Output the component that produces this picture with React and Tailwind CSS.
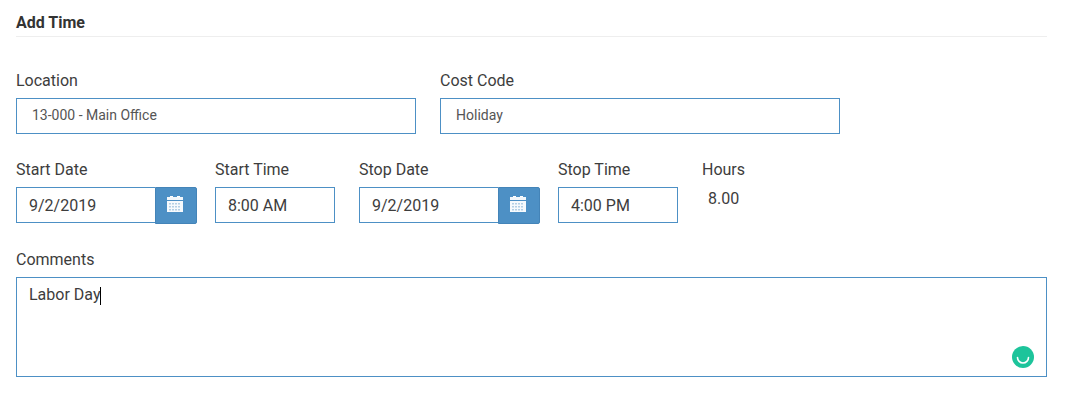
import React from 'react';

const Field = ({ label, className = '', children }) => (
    <div className={`flex flex-col ${className}`}>
        <label className="text-base leading-5 text-[#3d3d3d] mb-[7px]">{label}</label>
        {children}
    </div>
);

// Font Awesome style calendar, drawn small with the grid cut out
const CalendarIcon = () => (
    <svg width="16" height="16" viewBox="0 0 16 16" className="block">
        <rect x="3" y="0" width="3" height="2" fill="#fff" />
        <rect x="10" y="0" width="3" height="2" fill="#fff" />
        <rect x="0" y="1" width="16" height="3" fill="#f2f7fb" />
        <rect x="0" y="5" width="16" height="11" fill="#f6fafd" />
        <g fill="#b4d0e6">
            <rect x="2" y="7" width="2" height="1.5" />
            <rect x="5" y="7" width="2" height="1.5" />
            <rect x="8" y="7" width="2" height="1.5" />
            <rect x="11" y="7" width="2" height="1.5" />
            <rect x="2" y="10" width="2" height="1.5" />
            <rect x="5" y="10" width="2" height="1.5" />
            <rect x="8" y="10" width="2" height="1.5" />
            <rect x="11" y="10" width="2" height="1.5" />
            <rect x="2" y="13" width="2" height="1.5" />
            <rect x="5" y="13" width="2" height="1.5" />
            <rect x="8" y="13" width="2" height="1.5" />
            <rect x="11" y="13" width="2" height="1.5" />
        </g>
    </svg>
);

const DateInput = ({ value }) => (
    <div className="flex w-[181px] h-[36px]">
        <input
            readOnly
            value={value}
            className="w-[139px] h-[36px] border border-[#4d90c5] border-r-0 pl-[12px] text-base text-[#3d3d3d] outline-none"
        />
        <button className="w-[42px] h-[37px] bg-[#4d90c5] rounded-r-[2px] flex items-center justify-center border border-[#4484b8] pr-[3px] pb-[3px]">
            <CalendarIcon />
        </button>
    </div>
);

const TimeInput = ({ value }) => (
    <input
        readOnly
        value={value}
        className="w-[120px] h-[36px] border border-[#4d90c5] pl-[12px] text-base text-[#3d3d3d] outline-none"
    />
);

const SelectBox = ({ value }) => (
    <input
        readOnly
        value={value}
        className="w-[400px] h-[36px] border border-[#4d90c5] pl-[15px] pb-[2px] text-sm text-[#555555] outline-none"
    />
);

export default function App() {
    return (
        <div className="w-[1067px] h-[400px] bg-white pl-[16px] pr-[20px] pt-[14px] font-['Roboto',sans-serif] overflow-hidden">
            <h4 className="text-base leading-[18px] font-bold text-[#333333] pb-[4px] border-b border-[#eeeeee] h-[23px]">Add Time</h4>

            <div className="flex gap-[24px] mt-[34px]">
                <Field label="Location"><SelectBox value="13-000 - Main Office" /></Field>
                <Field label="Cost Code"><SelectBox value="Holiday" /></Field>
            </div>

            <div className="flex mt-[26px]">
                <Field label="Start Date" className="mr-[18px]"><DateInput value="9/2/2019" /></Field>
                <Field label="Start Time" className="mr-[24px]"><TimeInput value="8:00 AM" /></Field>
                <Field label="Stop Date" className="mr-[18px]"><DateInput value="9/2/2019" /></Field>
                <Field label="Stop Time" className="mr-[24px]"><TimeInput value="4:00 PM" /></Field>
                <div className="flex flex-col">
                    <span className="text-base leading-5 text-[#3d3d3d]">Hours</span>
                    <span className="text-base leading-5 text-[#3d3d3d] mt-[9px] pl-[6px]">8.00</span>
                </div>
            </div>

            <div className="mt-[27px]">
                <label className="block text-base leading-5 text-[#3d3d3d] mb-[7px]">Comments</label>
                <div className="relative w-[1031px] h-[100px] border border-[#4d90c5] px-[12px] pt-[7px] text-base leading-5 text-[#3d3d3d]">
                    Labor Day<span className="inline-block w-px h-[18px] bg-black align-middle" />
                    <div className="absolute right-[12px] bottom-[8px] w-[22px] h-[22px] rounded-full bg-[#1dc49b]">
                        <svg width="22" height="22" viewBox="0 0 22 22" className="block">
                            <path d="M5.5 11.5 A5.5 5.5 0 0 0 16.5 11.5" fill="none" stroke="#ffffff" strokeWidth="1.6" strokeLinecap="round" />
                        </svg>
                    </div>
                </div>
            </div>
        </div>
    );
}
